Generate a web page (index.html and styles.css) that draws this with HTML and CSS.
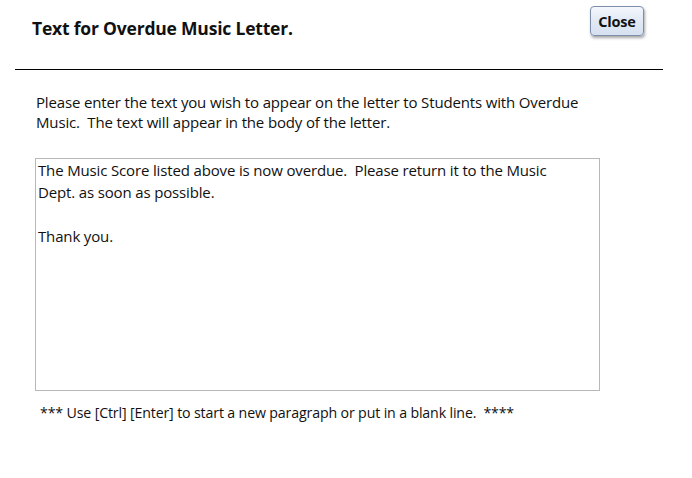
FILE: index.html
```html
<!DOCTYPE html>
<html>
<head>
<meta charset="utf-8">
<link rel="stylesheet" href="styles.css">
</head>
<body>
<div class="dialog">
  <header class="header">
    <h1 class="title">Text for Overdue Music Letter.</h1>
    <button class="close-btn">Close</button>
  </header>
  <hr class="divider">
  <p class="intro">Please enter the text you wish to appear on the letter to Students with Overdue<br>Music.&nbsp; The text will appear in the body of the letter.</p>
  <textarea class="letter">The Music Score listed above is now overdue.&nbsp; Please return it to the Music
Dept. as soon as possible.

Thank you.</textarea>
  <p class="note">*** Use [Ctrl] [Enter] to start a new paragraph or put in a blank line.&nbsp; ****</p>
</div>
</body>
</html>
```
FILE: styles.css
```css
html, body {
  margin: 0;
  padding: 0;
  background: #ffffff;
}
body {
  font-family: "Open Sans", "Noto Sans", sans-serif;
  color: #111111;
  width: 692px;
  height: 478px;
  overflow: hidden;
}
.dialog {
  padding: 0 29px 0 15px;
}
.header {
  display: flex;
  justify-content: space-between;
  align-items: flex-start;
  height: 69px;
}
.title {
  margin: 17px 0 0 17px;
  font-size: 17.5px;
  font-weight: 700;
  line-height: 22px;
  letter-spacing: -0.2px;
}
.close-btn {
  margin-top: 6px;
  margin-right: 19px;
  width: 54px;
  height: 30px;
  padding: 0;
  border: 1px solid #7d8fa8;
  border-radius: 4px;
  background: linear-gradient(#f4f7fc 0%, #e2e9f5 50%, #d6e0f0 100%);
  box-shadow: 1px 2px 3px rgba(0, 0, 0, 0.35);
  font-family: "Open Sans", sans-serif;
  font-size: 14.5px;
  font-weight: 700;
  color: #111;
  letter-spacing: -0.2px;
}
.divider {
  margin: 0;
  border: 0;
  border-top: 1px solid #000;
  width: 648px;
}
.intro {
  margin: 22px 0 0 21px;
  font-size: 15px;
  line-height: 20px;
  letter-spacing: -0.15px;
}
.letter {
  display: block;
  box-sizing: border-box;
  margin: 26px 0 0 20px;
  width: 565px;
  height: 233px;
  padding: 0 2px;
  border: 1px solid #b8b8b8;
  resize: none;
  font-family: "Open Sans", sans-serif;
  font-size: 15px;
  line-height: 22px;
  letter-spacing: -0.15px;
  color: #111;
  overflow: hidden;
}
.note {
  margin: 12px 0 0 25px;
  font-size: 14.2px;
  line-height: 20px;
  letter-spacing: -0.15px;
}
```
